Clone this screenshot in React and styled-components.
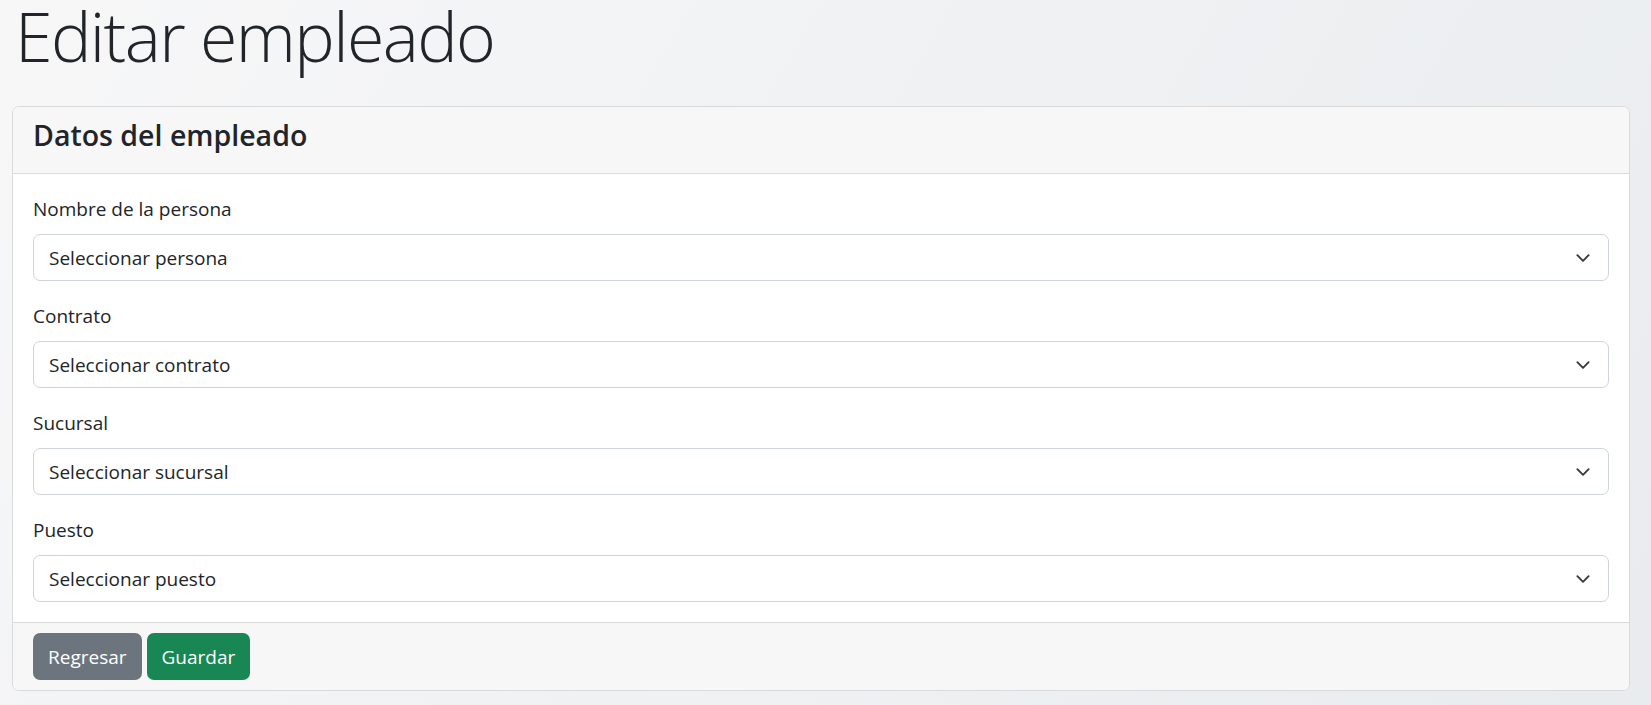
import React from 'react';
import styled, { createGlobalStyle } from 'styled-components';

const GlobalStyle = createGlobalStyle`
  * { box-sizing: border-box; }
  html, body { margin: 0; height: 100%; }
  body {
    font-family: "Open Sans", "Noto Sans", sans-serif;
    color: #212529;
    background: linear-gradient(120deg, #f7f7f8 0%, #eef0f2 60%, #e9ecef 100%);
    min-height: 705px;
  }
`;

const Page = styled.main`
  padding: 0 21px 16px 12px;
`;

const Title = styled.h1`
  margin: -10px 0 24px 3px;
  font-size: 68px;
  font-weight: 300;
  line-height: 92px;
  color: #212529;
  letter-spacing: -1.6px;
`;

const Card = styled.section`
  background: #fff;
  border: 1px solid #d9dadb;
  border-radius: 7px;
  overflow: hidden;
`;

const CardHeader = styled.header`
  background: #f7f7f7;
  border-bottom: 1px solid #d9dadb;
  padding: 10px 20px;
`;

const CardTitle = styled.h4`
  margin: 0 0 10px;
  font-size: 28.5px;
  font-weight: 600;
  line-height: 36px;
`;

const CardBody = styled.div`
  padding: 20px;
  display: flex;
  flex-direction: column;
  gap: 20px;
`;

const Field = styled.div`
  display: flex;
  flex-direction: column;
`;

const Label = styled.label`
  font-size: 19px;
  line-height: 30px;
  margin-bottom: 10px;
`;

const SelectBox = styled.div`
  position: relative;
  height: 47px;
  border: 1px solid #ced4da;
  border-radius: 7px;
  background: #fff;
  display: flex;
  align-items: center;
  padding: 0 56px 0 15px;
  font-size: 19px;
  color: #212529;
`;

const Chevron = styled.svg`
  position: absolute;
  right: 15px;
  top: 50%;
  transform: translateY(-50%);
  width: 20px;
  height: 15px;
`;

const CardFooter = styled.footer`
  background: #f7f7f7;
  border-top: 1px solid #d9dadb;
  padding: 10px 20px;
  display: flex;
  gap: 5px;
`;

const Button = styled.button`
  height: 47px;
  padding: 0 15px;
  border: none;
  border-radius: 7px;
  font-family: inherit;
  font-size: 19px;
  color: #fff;
  background: ${p => (p.$variant === 'success' ? '#198754' : '#6c757d')};
`;

const FIELDS = [
  { label: 'Nombre de la persona', placeholder: 'Seleccionar persona' },
  { label: 'Contrato', placeholder: 'Seleccionar contrato' },
  { label: 'Sucursal', placeholder: 'Seleccionar sucursal' },
  { label: 'Puesto', placeholder: 'Seleccionar puesto' },
];

const Select = ({ children }) => (
  <SelectBox>
    {children}
    <Chevron viewBox="0 0 16 16">
      <path
        d="m2 5 6 6 6-6"
        fill="none"
        stroke="#343a40"
        strokeWidth="2"
        strokeLinecap="round"
        strokeLinejoin="round"
      />
    </Chevron>
  </SelectBox>
);

const App = () => {
  return (
    <Page>
      <GlobalStyle />
      <Title>Editar empleado</Title>
      <Card>
        <CardHeader>
          <CardTitle>Datos del empleado</CardTitle>
        </CardHeader>
        <CardBody>
          {FIELDS.map(field => (
            <Field key={field.label}>
              <Label>{field.label}</Label>
              <Select>{field.placeholder}</Select>
            </Field>
          ))}
        </CardBody>
        <CardFooter>
          <Button>Regresar</Button>
          <Button $variant="success">Guardar</Button>
        </CardFooter>
      </Card>
    </Page>
  );
};

export default App;
